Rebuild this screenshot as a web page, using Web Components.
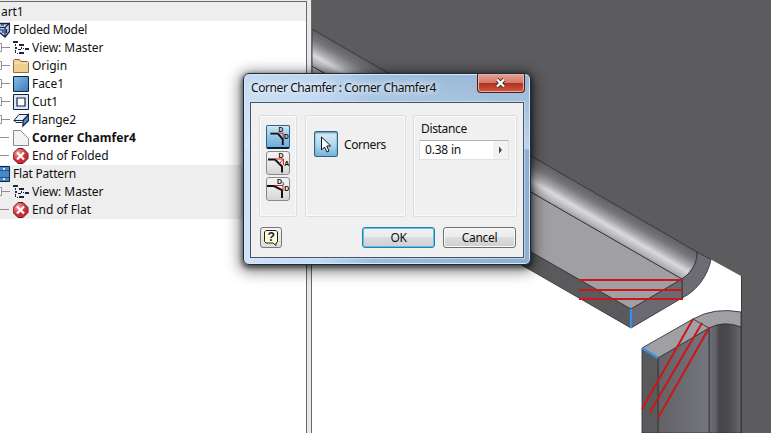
<!DOCTYPE html>
<html lang="en">
<head>
<meta charset="utf-8">
<title>Part1</title>
<style>
  html, body { margin: 0; height: 100%; overflow: hidden; }
  body { font-family: "Noto Sans", "Open Sans", sans-serif; font-size: 12px; color: #111; background: #fff; }
</style>
</head>
<body>
<cad-workspace>
  <model-browser slot="browser">
    <tree-row level="0" shaded>art1</tree-row>
    <tree-row level="1" icon="folded">Folded Model</tree-row>
    <tree-row level="2" icon="view" expander>View: Master</tree-row>
    <tree-row level="2" icon="folder" expander>Origin</tree-row>
    <tree-row level="2" icon="face" expander>Face1</tree-row>
    <tree-row level="2" icon="cut" expander>Cut1</tree-row>
    <tree-row level="2" icon="flange" expander>Flange2</tree-row>
    <tree-row level="2" icon="chamfer" current>Corner Chamfer4</tree-row>
    <tree-row level="2" icon="end">End of Folded</tree-row>
    <tree-row level="1" icon="flat" shaded>Flat Pattern</tree-row>
    <tree-row level="2" icon="view" expander shaded>View: Master</tree-row>
    <tree-row level="2" icon="end" shaded>End of Flat</tree-row>
  </model-browser>
  <model-view slot="view"></model-view>
  <chamfer-dialog slot="dialog">
    <span slot="title">Corner Chamfer : Corner Chamfer4</span>
    <chamfer-modes slot="modes"></chamfer-modes>
    <corner-picker slot="corners">Corners</corner-picker>
    <distance-field slot="distance" value="0.38 in">Distance</distance-field>
    <help-button slot="help"></help-button>
    <push-button slot="actions" primary>OK</push-button>
    <push-button slot="actions">Cancel</push-button>
  </chamfer-dialog>
</cad-workspace>

<script>
const treeIcons = {
  folded: `<path d="M-3 1.500H9.500v8L5 15 0 11h-3z" fill="#b9cdea" stroke="#152447" stroke-width="1.300"/><path d="M0 5.500h5l4-4M5 5.500V15M1 3h3M0 8h3v3M6.500 7v4" stroke="#152447" stroke-width="1.200" fill="none"/>`,
  view: `<g fill="#1c2740"><path d="M0 1h5v2H0zM6 4h5v2H6zM6 12h5v2H6zM12 8h4v2h-4zM2 7h2v2H2zM5 9h3v1H5z"/><path d="M2 4h1v2H2zM2 10h1v3H2zM4 13h1v1H4zM8 7h1v2H8zM10 8h1v1h-1z"/></g>`,
  folder: `<path d="M.5 14.500v-12l1-1h5l1.500 2h6.500l1 1v10z" fill="#f0cf94" stroke="#8f6b38"/><path d="M1.500 5h13" stroke="#fae7c1"/>`,
  face: `<defs><linearGradient id="f" x2="1" y2="1"><stop stop-color="#88bdeb"/><stop offset="1" stop-color="#397cbd"/></linearGradient></defs><path d="M.5.500h15v15H.5z" fill="url(#f)" stroke="#13233b"/>`,
  cut: `<path d="M.5.500h15v15H.5z" fill="#d9e8f8" stroke="#13233b"/><path d="M4 4h8v8H4z" fill="#fff" stroke="#13233b" stroke-width="1.200"/>`,
  flange: `<path d="M6 2.500h9.500L10 8.500H1z" fill="#e7f0fa" stroke="#162845"/><path d="M15.500 2.500v6L10 14V8.500z" fill="#4d8fd0" stroke="#162845" stroke-width="1.300"/><path d="M1 8.500l2 2h6" stroke="#162845" fill="none"/>`,
  chamfer: `<path d="M.5.500h7l8 8v7H.5z" fill="#f3f3f3" stroke="#8b8b8b"/>`,
  end: `<defs><radialGradient id="e" cx=".35" cy=".3"><stop stop-color="#f6a0a0"/><stop offset="1" stop-color="#cf2a32"/></radialGradient></defs><path d="M5 .5h5l5 5v5l-5 5H5l-5-5v-5z" fill="url(#e)" stroke="#5d2225"/><path d="M4 4.500l7 7m0-7l-7 7" stroke="#fff" stroke-width="2.200"/>`,
  flat: `<path d="M-6 .5H9.500v15H-6z" fill="#438ac6" stroke="#13233b"/><path d="M0 4.500h9M0 11.500h9" stroke="#1e5790"/><path d="M3 2h2v2H3zM3 12h2v2H3z" fill="#d5e8f8"/>`
};

class CadWorkspace extends HTMLElement {
  constructor() {
    super();
    this.attachShadow({ mode: 'open' }).innerHTML = `
      <style>
        :host { display: grid; grid-template-columns: 312px 1fr; height: 100vh; position: relative; overflow: hidden; }
        ::slotted([slot="dialog"]) { position: absolute; left: 243px; top: 73px; }
      </style>
      <slot name="browser"></slot>
      <slot name="view"></slot>
      <slot name="dialog"></slot>`;
  }
}

class ModelBrowser extends HTMLElement {
  constructor() {
    super();
    this.attachShadow({ mode: 'open' }).innerHTML = `
      <style>
        :host { display: flex; background: #e9e9ea; box-sizing: border-box; border-right: 1px solid #68686a; }
        .tree {
          box-sizing: border-box;
          width: 307px;
          border-top: 1px solid #68686a;
          border-right: 1px solid #68686a;
          margin-top: 1px;
          padding-top: 1px;
          background: linear-gradient(#eee 2px, #fff 2px);
        }
      </style>
      <div class="tree"><slot></slot></div>`;
  }
}

class TreeRow extends HTMLElement {
  connectedCallback() {
    const level = Number(this.getAttribute('level'));
    const icon = this.getAttribute('icon');
    const box = this.hasAttribute('expander') ? '<path d="M-5 4.500h6.500v8H-5" fill="#fff"/>' : '';
    const start = this.hasAttribute('expander') ? 2 : 0;
    const branch = level === 2
      ? `<svg class="branch" width="10" height="18" fill="none" stroke="#909090"><path d="M${start} 8.500h9"/>${box}</svg>`
      : '';
    const glyph = icon ? `<svg class="icon" width="${level === 1 ? 10 : 16}" height="16">${treeIcons[icon]}</svg>` : '';
    this.attachShadow({ mode: 'open' }).innerHTML = `
      <style>
        :host { display: flex; align-items: center; height: 18px; white-space: nowrap; line-height: 18px; letter-spacing: -.05px; }
        :host([level="1"]) { letter-spacing: -.2px; }
        :host([shaded]) { background: #eee; }
        :host([current]) { font-weight: bold; letter-spacing: .1px; }
        .branch { margin-right: 3px; flex: none; }
        .icon { flex: none; margin-right: 3px; }
        .text { padding-left: ${level === 0 ? 1 : 0}px; }
      </style>
      ${branch}${glyph}<span class="text"><slot></slot></span>`;
  }
}

class ModelView extends HTMLElement {
  constructor() {
    super();
    this.attachShadow({ mode: 'open' }).innerHTML = `
      <style>
        :host { display: block; overflow: hidden; }
        svg { display: block; }
      </style>
      <svg width="459" height="433" viewBox="312 0 459 433">
        <defs>
          <linearGradient id="bend" gradientUnits="userSpaceOnUse" x1="600" y1="196" x2="584" y2="223.700">
            <stop offset="0" stop-color="#626264"/>
            <stop offset=".25" stop-color="#77777b"/>
            <stop offset=".48" stop-color="#a6a6aa"/>
            <stop offset=".67" stop-color="#dadade"/>
            <stop offset=".82" stop-color="#c0c0c4"/>
            <stop offset="1" stop-color="#9c9ca0"/>
          </linearGradient>
          <linearGradient id="front" x2="1" y2="0">
            <stop stop-color="#626267"/><stop offset="1" stop-color="#75757e"/>
          </linearGradient>
          <linearGradient id="inner" x2="1" y2="0">
            <stop stop-color="#6f6f77"/><stop offset=".2" stop-color="#626268"/><stop offset=".32" stop-color="#47474b"/>
            <stop offset=".6" stop-color="#4b4b4f"/><stop offset="1" stop-color="#66666b"/>
          </linearGradient>
        </defs>
        <path d="M312 0H771V433H741V276L711 259.500L697 254L312 34Z" fill="#5c5c5e"/>
        <g stroke="#37373a" stroke-width=".9">
          <path d="M500 234L631 309V328L500 252.500Z" fill="#5a5a5c"/>
          <path d="M312 66L682 279L631 309L312 127Z" fill="#a0a0a4"/>
          <path d="M312 29L697 252C698 263 690 274 682 279L312 66Z" fill="url(#bend)"/>
          <path d="M697 252L711 259.500C708 275 697 291 682 298V279C690 274 698 263 697 252Z" fill="#6c6c75"/>
          <path d="M631 309L682 279V298L631 328Z" fill="#6a6a73"/>
          <path d="M709 433V328Q724 320 741 327V433Z" fill="url(#inner)"/>
          <path d="M658 358L709 328V433H658Z" fill="url(#front)"/>
          <path d="M642 348L658 358V433H642Z" fill="#5a5a5c"/>
          <path d="M642 348L693 319Q714 307 741 312V327Q724 320 709 328L658 358Z" fill="#a0a0a4"/>
          <path d="M693 319L709 328M741.500 276V433" fill="none"/>
        </g>
        <path d="M631 309V328M642 348L658 358" stroke="#338fe8" stroke-width="2.300"/>
        <path d="M579 280H683M579 290H683M579 299H683M693 319L642 409M702 323L650 412M709 328L658 418"
          stroke="#d01518" stroke-width="2"/>
      </svg>`;
  }
}

class ChamferDialog extends HTMLElement {
  constructor() {
    super();
    this.attachShadow({ mode: 'open' }).innerHTML = `
      <style>
        :host {
          display: flex;
          flex-direction: column;
          box-sizing: border-box;
          width: 288px;
          height: 192px;
          padding: 0 6px 6px;
          border: 1px solid #1c2c40;
          border-radius: 6px;
          box-shadow: inset 0 0 0 1px #d5e8f8, 0 2px 5px 1px rgba(0, 0, 0, .55), 0 3px 14px 4px rgba(0, 0, 0, .45);
          background:
            linear-gradient(#a9c4e044 0, #dcebfb99 75px, #a9caee00 76px),
            linear-gradient(90deg, #cfe2f6 0, #c2daf3 26%, #9dbcdd 45%, #8fafd1 100%);
        }
        header { display: flex; justify-content: space-between; height: 28px; flex: none; }
        .title {
          padding: 5px 0 0 1px;
          line-height: 18px;
          white-space: nowrap;
          letter-spacing: -.41px;
          text-shadow: 0 0 5px #fff, 0 0 8px #e8f2fc;
        }
        .close {
          width: 48px;
          height: 19px;
          box-sizing: border-box;
          margin-right: -1px;
          border: 1px solid #4b1c1c;
          border-top: 0;
          border-radius: 0 0 4px 4px;
          box-shadow: inset 0 0 0 1px #eab0a4;
          background: linear-gradient(#e2a294 0, #d37a6a 48%, #b12f1c 50%, #cf5a3d 100%);
          display: flex;
          justify-content: center;
          align-items: center;
        }
        .client {
          flex: 1;
          display: flex;
          flex-direction: column;
          gap: 10px;
          box-sizing: border-box;
          border: 1px solid #43546a;
          box-shadow: 0 0 0 1px #d9eafa99;
          padding: 12px 7px 9px 8px;
          background: #f0f0f0;
        }
        .groups { display: grid; grid-template-columns: 38px 101px 104px; gap: 7.500px; height: 102px; width: 258px; }
        .group { border: 1px solid #dcdfe2; border-radius: 2px; box-shadow: inset 0 0 0 1px #fafafa; box-sizing: border-box; }
        footer { display: flex; justify-content: space-between; padding-left: 1px; }
        .actions { display: flex; gap: 8px; }
      </style>
      <header>
        <span class="title"><slot name="title"></slot></span>
        <span class="close">
          <svg width="14" height="12" fill="none"><path d="M3 2.500l7 7m0-7l-7 7" stroke="#4b2525" stroke-width="4"/><path d="M3 2.500l7 7m0-7l-7 7" stroke="#fff" stroke-width="2.400"/></svg>
        </span>
      </header>
      <div class="client">
        <div class="groups">
          <div class="group"><slot name="modes"></slot></div>
          <div class="group"><slot name="corners"></slot></div>
          <div class="group"><slot name="distance"></slot></div>
        </div>
        <footer>
          <slot name="help"></slot>
          <div class="actions"><slot name="actions"></slot></div>
        </footer>
      </div>`;
  }
}

class ChamferModes extends HTMLElement {
  constructor() {
    super();
    this.attachShadow({ mode: 'open' }).innerHTML = `
      <style>
        :host { display: flex; flex-direction: column; gap: 2px; padding: 9px 0 0 6px; }
        svg {
          box-sizing: border-box;
          width: 24px;
          height: 24px;
          border: 1px solid #8a8a8a;
          border-radius: 3px;
          background: linear-gradient(#f3f3f3 0, #e8e8e8 50%, #d5d5d5 100%);
          fill: none;
        }
        svg.on { border-color: #2c628b; border-bottom: 2px solid #0c1c2c; border-radius: 2px; background: linear-gradient(#d0e6f5, #95c6e6 50%, #6badd8); }
        text { font: bold 7px "Liberation Sans", sans-serif; fill: #111; }
      </style>
      <svg class="on" viewBox="0 0 22 22"><path d="M3 8h8l5 6v6" stroke="#111" stroke-width="2"/><path d="M11 7.500h5.500v6" stroke="#d22"/><text x="11.500" y="6">D</text><text x="17.200" y="13.500">D</text></svg>
      <svg viewBox="0 0 22 22"><path d="M1 7.500h7l7 7v6" stroke="#111" stroke-width="2"/><path d="M8 7h8.500l-4 4.500M16.500 7v6" stroke="#d22"/><text x="11.500" y="6">D</text><text x="17.200" y="13.500">A</text></svg>
      <svg viewBox="0 0 22 22"><path d="M-1 8h8l8 4v8" stroke="#111" stroke-width="2"/><path d="M8 7.500h8v5" stroke="#d22"/><text x="10" y="6">D</text><text x="15" y="6.500" style="font-size:4px">1</text><text x="17.200" y="13">D</text></svg>`;
  }
}

class CornerPicker extends HTMLElement {
  constructor() {
    super();
    this.attachShadow({ mode: 'open' }).innerHTML = `
      <style>
        :host { display: flex; align-items: center; gap: 6.500px; padding: 15px 0 0 8px; letter-spacing: -.4px; }
        .pick {
          box-sizing: border-box;
          width: 24px;
          height: 26px;
          border: 1px solid #2c628b;
          border-radius: 2px;
          box-shadow: inset 0 1px 2px #5c88a6;
          background: linear-gradient(#d9edf9 0, #b2daf1 50%, #75b5dd 100%);
        }
      </style>
      <svg class="pick" viewBox="0 0 22 24"><path d="M6.500 5v13l3-3 2.500 5 2-1-2.300-5h4z" fill="#fff" stroke="#111"/></svg>
      <slot></slot>`;
  }
}

class DistanceField extends HTMLElement {
  connectedCallback() {
    this.attachShadow({ mode: 'open' }).innerHTML = `
      <style>
        :host { display: flex; flex-direction: column; padding: 4px 0 0 5px; }
        .label { line-height: 18px; padding-left: 2px; letter-spacing: -.35px; }
        .field {
          display: flex;
          box-sizing: border-box;
          width: 90px;
          height: 20px;
          margin-top: 2px;
          border: 1px solid #e0e1e3;
          border-top-color: #b2b4b9;
          background: #fff;
        }
        .value { flex: 1; padding-left: 5px; line-height: 18px; letter-spacing: -.2px; }
        .more { width: 15px; display: flex; justify-content: center; align-items: center; background: #f2f2f2; }
      </style>
      <span class="label"><slot></slot></span>
      <div class="field">
        <span class="value">${this.getAttribute('value')}</span>
        <span class="more"><svg width="5" height="8"><path d="M1 .5v7l3-3.500z" fill="#444"/></svg></span>
      </div>`;
  }
}

class HelpButton extends HTMLElement {
  constructor() {
    super();
    this.attachShadow({ mode: 'open' }).innerHTML = `
      <style>
        :host {
          display: block;
          box-sizing: border-box;
          width: 22px;
          height: 21px;
          border: 1px solid #777;
          border-radius: 3px;
          background: linear-gradient(#f3f3f3, #ddd);
        }
        svg { display: block; }
        text { font: bold 12px "Liberation Sans", sans-serif; fill: #16166b; }
      </style>
      <svg width="20" height="19"><path d="M5 2.500h10l1.500 1.500v10l-1.500 1v2.500l-3-2.500H5L3.500 13.500V4z" fill="#ffffd2" stroke="#222"/><text x="6.500" y="13">?</text></svg>`;
  }
}

class PushButton extends HTMLElement {
  constructor() {
    super();
    this.attachShadow({ mode: 'open' }).innerHTML = `
      <style>
        :host {
          display: flex;
          justify-content: center;
          align-items: center;
          box-sizing: border-box;
          width: 73px;
          height: 21px;
          border: 1px solid #707070;
          border-radius: 3px;
          box-shadow: inset 0 0 0 1px #fbfbfb;
          background: linear-gradient(#f2f2f2 0, #ebebeb 50%, #dddddd 50%, #cfcfcf 100%);
          letter-spacing: -.3px;
        }
        :host([primary]) { border-color: #2c7fa8; box-shadow: inset 0 0 0 1px #58c5ea; }
      </style>
      <slot></slot>`;
  }
}

customElements.define('cad-workspace', CadWorkspace);
customElements.define('model-browser', ModelBrowser);
customElements.define('tree-row', TreeRow);
customElements.define('model-view', ModelView);
customElements.define('chamfer-dialog', ChamferDialog);
customElements.define('chamfer-modes', ChamferModes);
customElements.define('corner-picker', CornerPicker);
customElements.define('distance-field', DistanceField);
customElements.define('help-button', HelpButton);
customElements.define('push-button', PushButton);
</script>
</body>
</html>
